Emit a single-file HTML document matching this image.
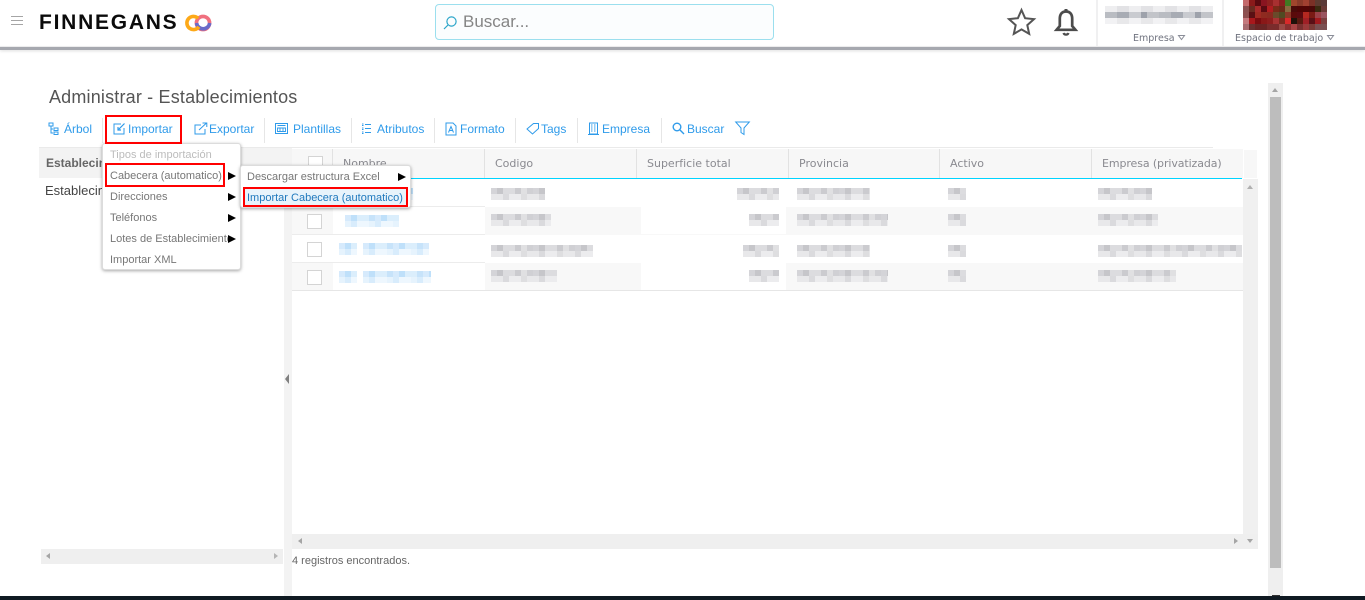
<!DOCTYPE html>
<html lang="es"><head><meta charset="utf-8"><title>Administrar - Establecimientos</title>
<style>
*{box-sizing:border-box}
html,body{margin:0;padding:0;width:1365px;height:600px;overflow:hidden;background:#fff;font-family:"Liberation Sans",sans-serif}
.a{position:absolute}
.t{position:absolute;white-space:nowrap;line-height:16px}
.tb{color:#2f9bea;font-size:12px;top:121px}
.sep{position:absolute;top:118px;width:1px;height:25px;background:#e6e6e6}
.h{position:absolute;top:156px;font-family:"DejaVu Sans",sans-serif;font-size:11px;color:#8a8a90;line-height:16px;white-space:nowrap}
.vd{position:absolute;top:149px;width:1px;height:29px;background:#e2e2e2}
.m{position:absolute;font-size:11px;color:#777;line-height:14px;white-space:nowrap}
.ar{position:absolute;width:0;height:0;border-left:8px solid #000;border-top:4.5px solid transparent;border-bottom:4.5px solid transparent}
.b{position:absolute;height:12px;background-image:repeating-linear-gradient(90deg,#d4d4d8 0 6px,#c6c6ca 6px 12px,#dcdcdf 12px 24px,#cbcbcf 24px 30px,#e0e0e2 30px 36px,#d0d0d4 36px 42px),repeating-linear-gradient(90deg,#e8e8ea 0 12px,#dadadd 12px 18px,#ececee 18px 30px,#dedee0 30px 36px);background-size:100% 6px,100% 6px;background-position:0 0,0 6px;background-repeat:no-repeat}
.l{position:absolute;height:12px;background-image:repeating-linear-gradient(90deg,#d6eafc 0 6px,#bfe0fa 6px 12px,#dbeefc 12px 24px,#c7e3fa 24px 30px),repeating-linear-gradient(90deg,#e6f3fd 0 6px,#d8ecfc 6px 12px,#eef7fe 12px 24px);background-size:100% 6px,100% 6px;background-position:0 0,0 6px;background-repeat:no-repeat}
.cb{position:absolute;left:307px;width:15px;height:15px;background:#fff;border:1px solid #d4d4d4}
.red{position:absolute;border:2px solid #f00}
svg{position:absolute;overflow:visible}
</style></head><body>

<!-- header -->
<div class="a" style="left:0;top:46px;width:1365px;height:1px;background:#eeeef0"></div>
<div class="a" style="left:0;top:47px;width:1365px;height:3px;background:#a6a8af;box-shadow:0 1px 3px #ddd"></div>
<div class="a" style="left:11px;top:16px;width:12px;height:1px;background:#a5a5a5"></div>
<div class="a" style="left:11px;top:20px;width:12px;height:1px;background:#a5a5a5"></div>
<div class="a" style="left:11px;top:24px;width:12px;height:1px;background:#a5a5a5"></div>
<div class="t" style="left:39px;top:12px;font-size:21px;line-height:22px;font-weight:700;color:#0b0b0b;letter-spacing:1.75px">FINNEGANS</div>
<svg style="left:185px;top:14px" width="27" height="18" viewBox="0 0 27 18" fill="none" stroke-width="3.6">
<circle cx="18" cy="9" r="6.6" stroke="#f0707f"/>
<path d="M11.6 9a6.6 6.6 0 0 0 13.1 0" stroke="#6a6bc9"/>
<circle cx="8.5" cy="9" r="6.6" stroke="#fda918" stroke-dasharray="32 10" transform="rotate(35 8.5 9)"/>
</svg>
<div class="a" style="left:435px;top:4px;width:339px;height:36px;background:#fbfdfe;border:1px solid #9bdfee;border-radius:4px"></div>
<svg style="left:442px;top:15px" width="16" height="16" viewBox="0 0 16 16" fill="none" stroke="#2aa5c9" stroke-width="1.2"><circle cx="9.5" cy="6.5" r="4.6"/><path d="M6 10l-4 4"/></svg>
<div class="t" style="left:463px;top:12px;font-size:17px;line-height:20px;color:#858585">Buscar...</div>
<svg style="left:1007px;top:8px" width="29" height="28" viewBox="0 0 29 28" fill="none" stroke="#555" stroke-width="2"><path d="M14.5 2l3.6 8.2 8.9.9-6.7 6 1.9 8.8-7.7-4.5-7.7 4.5 1.9-8.8-6.7-6 8.9-.9z"/></svg>
<svg style="left:1054px;top:8px" width="24" height="29" viewBox="0 0 24 29" fill="none" stroke="#4c4c4c" stroke-width="2.7"><path d="M12 3.500c-4.400 0-6.200 3.200-6.200 7.300v7.200L2.600 21.800h18.800l-3.200-3.800v-7.200c0-4.100-1.800-7.300-6.200-7.300z"/><path d="M12 1v3" stroke-width="3"/><path d="M9.500 25a2.600 2.200 0 0 0 5 0" stroke-width="2.200"/></svg>
<div class="a" style="left:1096px;top:0;width:2px;height:46px;background:#f0f0f1"></div>
<div class="a" style="left:1222px;top:0;width:2px;height:46px;background:#f0f0f1"></div>
<div class="b" style="left:1105px;top:6px;width:108px;height:18px;background-size:100% 6px;background-image:repeating-linear-gradient(90deg,#eeeef0 0 12px,#e2e2e5 12px 24px),repeating-linear-gradient(90deg,#b9bcc2 0 12px,#a8acb4 12px 24px,#c9cbd0 24px 36px,#9ea2ab 36px 42px,#c2c4c9 42px 54px),repeating-linear-gradient(90deg,#f2f2f4 0 12px,#e8e8ea 12px 24px);background-position:0 0,0 6px,0 12px"></div>
<div class="t" style="left:1133px;top:31px;font-family:'DejaVu Sans',sans-serif;font-size:9.5px;color:#70737f">Empresa</div>
<svg style="left:1178px;top:35px" width="7" height="5"><path d="M.5.5h6L3.500 4.500z" fill="none" stroke="#8a8d98"/></svg>
<div class="t" style="left:1235px;top:31px;font-family:'DejaVu Sans',sans-serif;font-size:9.5px;color:#70737f">Espacio de trabajo</div>
<svg style="left:1327px;top:35px" width="7" height="5"><path d="M.5.5h6L3.500 4.500z" fill="none" stroke="#8a8d98"/></svg>
<svg style="left:1243px;top:0" width="84" height="30" viewBox="0 0 14 5" preserveAspectRatio="none" shape-rendering="crispEdges">
<rect width="14" height="5" fill="#8c3030"/>
<rect x="0" width="1" height="1" fill="#c46a6c"/><rect x="1" width="1" height="1" fill="#8a1a1a"/><rect x="2" width="1" height="1" fill="#5a0a10"/><rect x="3" width="1" height="1" fill="#8a1420"/><rect x="4" width="1" height="1" fill="#8f2020"/><rect x="5" width="1" height="1" fill="#a83030"/><rect x="6" width="1" height="1" fill="#8a2020"/><rect x="7" width="1" height="1" fill="#3f7a22"/><rect x="8" width="1" height="1" fill="#a0452c"/><rect x="9" width="1" height="1" fill="#8a3a2a"/><rect x="10" width="1" height="1" fill="#a04030"/><rect x="11" width="1" height="1" fill="#7a3026"/><rect x="12" width="1" height="1" fill="#5c3a30"/><rect x="13" width="1" height="1" fill="#5a3a38"/>
<rect x="0" y="1" width="1" height="1" fill="#8a5050"/><rect x="1" y="1" width="1" height="1" fill="#6a2a20"/><rect x="2" y="1" width="1" height="1" fill="#a82a2a"/><rect x="3" y="1" width="1" height="1" fill="#5a0a12"/><rect x="4" y="1" width="1" height="1" fill="#b01c20"/><rect x="5" y="1" width="1" height="1" fill="#7a2a18"/><rect x="6" y="1" width="1" height="1" fill="#6a2a18"/><rect x="7" y="1" width="1" height="1" fill="#8a6a40"/><rect x="8" y="1" width="1" height="1" fill="#4a0a0a"/><rect x="9" y="1" width="1" height="1" fill="#500505"/><rect x="10" y="1" width="1" height="1" fill="#500505"/><rect x="11" y="1" width="1" height="1" fill="#4a0808"/><rect x="12" y="1" width="1" height="1" fill="#3a2a10"/><rect x="13" y="1" width="1" height="1" fill="#6a3a36"/>
<rect x="0" y="2" width="1" height="1" fill="#8e5050"/><rect x="1" y="2" width="1" height="1" fill="#5a1014"/><rect x="2" y="2" width="1" height="1" fill="#a02a22"/><rect x="3" y="2" width="1" height="1" fill="#8f2a20"/><rect x="4" y="2" width="1" height="1" fill="#8a2a20"/><rect x="5" y="2" width="1" height="1" fill="#6a4a2a"/><rect x="6" y="2" width="1" height="1" fill="#504a22"/><rect x="7" y="2" width="1" height="1" fill="#8a3a28"/><rect x="8" y="2" width="1" height="1" fill="#5a0a0a"/><rect x="9" y="2" width="1" height="1" fill="#5a0a10"/><rect x="10" y="2" width="1" height="1" fill="#b42820"/><rect x="11" y="2" width="1" height="1" fill="#7a1a14"/><rect x="12" y="2" width="1" height="1" fill="#9a4048"/><rect x="13" y="2" width="1" height="1" fill="#9a5560"/>
<rect x="0" y="3" width="1" height="1" fill="#c47a7e"/><rect x="1" y="3" width="1" height="1" fill="#a8181c"/><rect x="2" y="3" width="1" height="1" fill="#7a0c10"/><rect x="3" y="3" width="1" height="1" fill="#8a1818"/><rect x="4" y="3" width="1" height="1" fill="#8f1e1e"/><rect x="5" y="3" width="1" height="1" fill="#a83434"/><rect x="6" y="3" width="1" height="1" fill="#7a2a1e"/><rect x="7" y="3" width="1" height="1" fill="#d82a2a"/><rect x="8" y="3" width="1" height="1" fill="#20120a"/><rect x="9" y="3" width="1" height="1" fill="#5a1a10"/><rect x="10" y="3" width="1" height="1" fill="#a02026"/><rect x="11" y="3" width="1" height="1" fill="#5a1016"/><rect x="12" y="3" width="1" height="1" fill="#a01a1e"/><rect x="13" y="3" width="1" height="1" fill="#7a4040"/>
<rect x="0" y="4" width="1" height="1" fill="#a86c70"/><rect x="1" y="4" width="1" height="1" fill="#6a3030"/><rect x="2" y="4" width="2" height="1" fill="#6a2424"/><rect x="4" y="4" width="2" height="1" fill="#7a2c2c"/><rect x="6" y="4" width="1" height="1" fill="#9a4a46"/><rect x="7" y="4" width="1" height="1" fill="#8a3030"/><rect x="8" y="4" width="1" height="1" fill="#a84444"/><rect x="9" y="4" width="1" height="1" fill="#7a3030"/><rect x="10" y="4" width="1" height="1" fill="#9a3a3a"/><rect x="11" y="4" width="1" height="1" fill="#7a3a36"/><rect x="12" y="4" width="2" height="1" fill="#7a5052"/>
</svg>

<!-- page scrollbar -->
<div class="a" style="left:1268px;top:83px;width:15px;height:513px;background:#efefef"></div>
<div class="a" style="left:1270px;top:97px;width:11px;height:471px;background:#bdbdbd"></div>
<div class="a" style="left:1272px;top:88px;width:0;height:0;border-left:3.5px solid transparent;border-right:3.5px solid transparent;border-bottom:4px solid #a5a5a5"></div>

<div class="t" style="left:49px;top:87px;font-size:18px;line-height:20px;color:#555;letter-spacing:.18px">Administrar - Establecimientos</div>

<!-- toolbar -->
<div class="a" style="left:39px;top:147px;width:1174px;height:1px;background:#eaeaea"></div>
<svg style="left:48px;top:122px" width="11" height="13" viewBox="0 0 11 13" fill="none" stroke="#2f9bea"><path d="M1 1h4v3H1zM3 4v7h2M3 7h2M6 6h4v2.500H6zM6 10h4v2.500H6z"/></svg>
<div class="t tb" style="left:64px">Árbol</div>
<svg style="left:113px;top:122px" width="13" height="13" viewBox="0 0 13 13" fill="none" stroke="#2f9bea"><path d="M8 2H1v10h10V6"/><path d="M11.500 1.500L5 8M5 5v3h3" stroke-width="1.200"/></svg>
<div class="t tb" style="left:128px">Importar</div>
<svg style="left:194px;top:122px" width="14" height="13" viewBox="0 0 14 13" fill="none" stroke="#2f9bea"><path d="M7 3H1v9h10V7"/><path d="M5 8l7.500-7M8.500 1h4.300v4"/></svg>
<div class="t tb" style="left:209px">Exportar</div>
<svg style="left:275px;top:122px" width="13" height="13" viewBox="0 0 13 13" fill="none" stroke="#2f9bea"><rect x=".5" y="1.500" width="12" height="10"/><path d="M2.500 3.500h8M2.500 6v3.500h8V6zM5 6v3.500M8 6v3.500" stroke-width=".9"/></svg>
<div class="t tb" style="left:293px">Plantillas</div>
<svg style="left:361px;top:123px" width="12" height="12" viewBox="0 0 12 12" fill="none" stroke="#2f9bea"><path d="M4 1.500h6M4 5.500h6M4 9.500h6M1 1h1.500M1 2.500h1.500M1 5h1.500M1 6.500h1.500M1 9h1.500M1 10.500h1.500" stroke-width=".9"/></svg>
<div class="t tb" style="left:377px">Atributos</div>
<svg style="left:445px;top:122px" width="12" height="14" viewBox="0 0 12 14" fill="none" stroke="#2f9bea"><path d="M1 1h7l3 3v9H1z"/><path d="M3.500 10.500L6 4.500l2.500 6M4.500 8.500h3"/></svg>
<div class="t tb" style="left:460px">Formato</div>
<svg style="left:526px;top:122px" width="13" height="13" viewBox="0 0 13 13" fill="none" stroke="#2f9bea"><path d="M7.500 1.500h5v5L6.500 12 1 7z"/></svg>
<div class="t tb" style="left:541px">Tags</div>
<svg style="left:588px;top:122px" width="11" height="14" viewBox="0 0 11 14" fill="none" stroke="#2f9bea"><path d="M1.500 1h8v11h-8zM0 12.500h11"/><path d="M3 3h1.500M6 3h1.500M3 5h1.500M6 5h1.500M3 7h1.500M6 7h1.500M3 9h1.500M6 9h1.500" stroke-width="1"/></svg>
<div class="t tb" style="left:602px">Empresa</div>
<svg style="left:672px;top:122px" width="13" height="13" viewBox="0 0 13 13" fill="none" stroke="#2f9bea" stroke-width="1.400"><circle cx="5" cy="5" r="3.800"/><path d="M8 8l4 4"/></svg>
<div class="t tb" style="left:687px">Buscar</div>
<svg style="left:735px;top:121px" width="15" height="15" viewBox="0 0 15 15" fill="none" stroke="#2f9bea"><path d="M.7 1h13.600L9 7v6.500L6 11.500V7z"/></svg>
<div class="sep" style="left:102px"></div><div class="sep" style="left:264px"></div><div class="sep" style="left:351px"></div><div class="sep" style="left:434px"></div><div class="sep" style="left:515px"></div><div class="sep" style="left:577px"></div><div class="sep" style="left:661px"></div>

<!-- left panel -->
<div class="a" style="left:39px;top:148px;width:246px;height:30px;background:#f3f3f3"></div>
<div class="t" style="left:46px;top:155px;font-size:12px;font-weight:700;color:#666">Establecimientos</div>
<div class="t" style="left:45px;top:183px;font-size:13px;color:#444">Establecimientos</div>
<div class="a" style="left:41px;top:549px;width:242px;height:15px;background:#efefef"></div>
<div class="a" style="left:46px;top:553px;border-right:4px solid #a5a5a5;border-top:3.500px solid transparent;border-bottom:3.500px solid transparent"></div>
<div class="a" style="left:274px;top:553px;border-left:4px solid #b5b5b5;border-top:3.500px solid transparent;border-bottom:3.500px solid transparent"></div>
<div class="a" style="left:284px;top:148px;width:8px;height:448px;background:#f3f3f3"></div>
<div class="a" style="left:285px;top:374px;border-right:4px solid #808080;border-top:5px solid transparent;border-bottom:5px solid transparent"></div>

<!-- grid -->
<div class="a" style="left:292px;top:149px;width:951px;height:29px;background:#f7f7f7"></div>
<div class="a" style="left:292px;top:178px;width:950px;height:1px;background:#00d4ff"></div>
<div class="a" style="left:308px;top:156px;width:15px;height:15px;background:#fff;border:1px solid #d4d4d4"></div>
<div class="vd" style="left:332px"></div><div class="vd" style="left:484px"></div><div class="vd" style="left:636px"></div><div class="vd" style="left:788px"></div><div class="vd" style="left:939px"></div><div class="vd" style="left:1091px"></div>
<div class="h" style="left:343px">Nombre</div><div class="h" style="left:495px">Codigo</div><div class="h" style="left:647px">Superficie total</div><div class="h" style="left:799px">Provincia</div><div class="h" style="left:950px">Activo</div><div class="h" style="left:1102px;letter-spacing:-.1px">Empresa (privatizada)</div>

<div class="a" style="left:292px;top:207px;width:951px;height:28px;background:#f8f8f8"></div>
<div class="a" style="left:292px;top:263px;width:951px;height:28px;background:#f8f8f8"></div>
<div class="a" style="left:333px;top:207px;width:152px;height:28px;background:#fff"></div>
<div class="a" style="left:333px;top:263px;width:152px;height:28px;background:#fff"></div>
<div class="a" style="left:641px;top:207px;width:145px;height:27px;background:#fff"></div>
<div class="a" style="left:641px;top:263px;width:145px;height:28px;background:#fff"></div>
<div class="a" style="left:292px;top:206px;width:193px;height:1px;background:#ececec"></div>
<div class="a" style="left:292px;top:234px;width:193px;height:1px;background:#ececec"></div>
<div class="a" style="left:292px;top:262px;width:193px;height:1px;background:#ececec"></div>
<div class="a" style="left:292px;top:290px;width:951px;height:1px;background:#e6e6e6"></div>
<div class="cb" style="top:186px"></div><div class="cb" style="top:214px"></div><div class="cb" style="top:242px"></div><div class="cb" style="top:270px"></div>

<div class="l" style="left:345px;top:188px;width:68px"></div>
<div class="l" style="left:345px;top:215px;width:54px"></div>
<div class="l" style="left:339px;top:243px;width:18px"></div><div class="l" style="left:363px;top:243px;width:66px"></div>
<div class="l" style="left:339px;top:271px;width:18px"></div><div class="l" style="left:363px;top:271px;width:68px"></div>

<div class="b" style="left:491px;top:188px;width:54px"></div>
<div class="b" style="left:491px;top:214px;width:60px"></div>
<div class="b" style="left:491px;top:245px;width:102px"></div>
<div class="b" style="left:491px;top:270px;width:66px"></div>
<div class="b" style="left:737px;top:188px;width:42px"></div>
<div class="b" style="left:749px;top:214px;width:30px"></div>
<div class="b" style="left:743px;top:245px;width:36px"></div>
<div class="b" style="left:749px;top:270px;width:30px"></div>
<div class="b" style="left:797px;top:188px;width:73px"></div>
<div class="b" style="left:797px;top:214px;width:91px"></div>
<div class="b" style="left:797px;top:245px;width:73px"></div>
<div class="b" style="left:797px;top:270px;width:91px"></div>
<div class="b" style="left:948px;top:188px;width:18px"></div>
<div class="b" style="left:948px;top:214px;width:18px"></div>
<div class="b" style="left:948px;top:245px;width:18px"></div>
<div class="b" style="left:948px;top:270px;width:18px"></div>
<div class="b" style="left:1098px;top:188px;width:54px"></div>
<div class="b" style="left:1098px;top:214px;width:60px"></div>
<div class="b" style="left:1098px;top:245px;width:144px"></div>
<div class="b" style="left:1098px;top:270px;width:78px"></div>

<!-- grid scrollbars -->
<div class="a" style="left:1243px;top:149px;width:15px;height:400px;background:#f0f0f0"></div>
<div class="a" style="left:1243px;top:149px;width:15px;height:30px;background:#f7f7f7;border:1px solid #fff"></div>
<div class="a" style="left:1247px;top:185px;border-left:3.500px solid transparent;border-right:3.500px solid transparent;border-bottom:4px solid #b0b0b0"></div>
<div class="a" style="left:292px;top:534px;width:966px;height:15px;background:#efefef"></div>
<div class="a" style="left:298px;top:538px;border-right:4px solid #a5a5a5;border-top:3.500px solid transparent;border-bottom:3.500px solid transparent"></div>
<div class="a" style="left:1234px;top:538px;border-left:4px solid #a5a5a5;border-top:3.500px solid transparent;border-bottom:3.500px solid transparent"></div>
<div class="a" style="left:1247px;top:539px;border-left:3.500px solid transparent;border-right:3.500px solid transparent;border-top:4px solid #a5a5a5"></div>
<div class="t" style="left:292px;top:553px;font-size:11px;color:#666">4 registros encontrados.</div>

<!-- menu -->
<div class="a" style="left:102px;top:143px;width:139px;height:127px;background:#fff;border:1px solid #dcdcdc;border-radius:3px;box-shadow:0 1px 3px rgba(0,0,0,.35)"></div>
<div class="m" style="left:110px;top:148px;color:#bcbcbc">Tipos de importación</div>
<div class="m" style="left:110px;top:169px">Cabecera (automatico)</div>
<div class="m" style="left:110px;top:190px">Direcciones</div>
<div class="m" style="left:110px;top:211px">Teléfonos</div>
<div class="m" style="left:110px;top:232px;width:118px;overflow:hidden">Lotes de Establecimiento</div>
<div class="m" style="left:110px;top:253px">Importar XML</div>
<div class="ar" style="left:228px;top:172px"></div><div class="ar" style="left:228px;top:193px"></div><div class="ar" style="left:228px;top:214px"></div><div class="ar" style="left:228px;top:235px"></div>
<div class="a" style="left:240px;top:165px;width:171px;height:43px;background:#fff;border:1px solid #dcdcdc;border-radius:3px;box-shadow:0 1px 3px rgba(0,0,0,.35)"></div>
<div class="a" style="left:245px;top:189px;width:161px;height:16px;background:#e8f3fb"></div>
<div class="m" style="left:247px;top:170px">Descargar estructura Excel</div>
<div class="m" style="left:247px;top:191px;color:#1f78bd">Importar Cabecera (automatico)</div>
<div class="ar" style="left:398px;top:173px"></div>
<div class="red" style="left:105px;top:115px;width:77px;height:29px"></div>
<div class="red" style="left:105px;top:163px;width:120px;height:24px"></div>
<div class="red" style="left:243px;top:187px;width:165px;height:20px"></div>

<!-- bottom bar -->
<div class="a" style="left:1272px;top:595px;width:8px;height:1px;background:#333"></div>
<div class="a" style="left:0;top:596px;width:1365px;height:4px;background:#101a22"></div>
</body></html>
